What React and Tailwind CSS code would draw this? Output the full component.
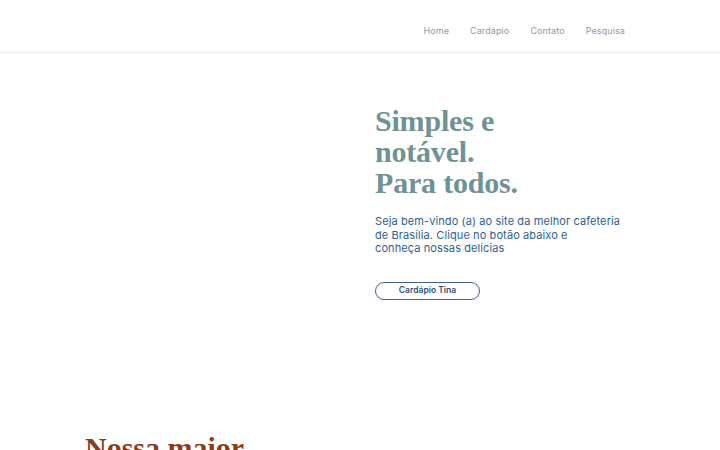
import React from 'react';

const navLinks = ['Home', 'Cardápio', 'Contato', 'Pesquisa'];

const sans = { fontFamily: 'Inter, "Noto Sans", sans-serif' };
const serif = { fontFamily: '"Liberation Serif", "DejaVu Serif", serif' };

const App = () => {
  return (
    <div className="min-h-screen bg-white" style={sans}>
      {/* Header */}
      <header className="h-[53px] border-b border-[#ececec] flex items-center pt-[9px]">
        <nav className="w-[550px] mx-auto flex justify-end gap-[21px] pr-[10px]">
          {navLinks.map((link) => (
            <a key={link} href="#" className="text-[9px] text-[#8e9aa3] tracking-[0.1px]">
              {link}
            </a>
          ))}
        </nav>
      </header>

      {/* Hero */}
      <section className="w-[550px] mx-auto grid grid-cols-[290px_1fr] pt-[52px] h-[340px]">
        <div />
        <div>
          <h1
            className="text-[30px] font-bold leading-[31px] text-[#6f9295] tracking-[-0.2px]"
            style={serif}
          >
            Simples e<br />
            notável.<br />
            Para todos.
          </h1>
          <p className="mt-[17px] text-[11px] leading-[13.5px] text-[#2f5f8e] tracking-[0.1px]">
            Seja bem-vindo (a) ao site da melhor cafeteria<br />
            de Brasília. Clique no botão abaixo e<br />
            conheça nossas delícias
          </p>
          <button className="mt-[26px] w-[105px] h-[18px] rounded-full border border-[#3f6189] text-[8.5px] font-semibold text-[#2f4f7a] flex items-center justify-center">
            Cardápio Tina
          </button>
        </div>
      </section>

      {/* Next section */}
      <section className="w-[550px] mx-auto pt-[38px]">
        <h2 className="text-[30px] font-bold leading-[34px] text-[#8b3a1a]" style={serif}>
          Nossa maior
        </h2>
      </section>
    </div>
  );
};

export default App;
